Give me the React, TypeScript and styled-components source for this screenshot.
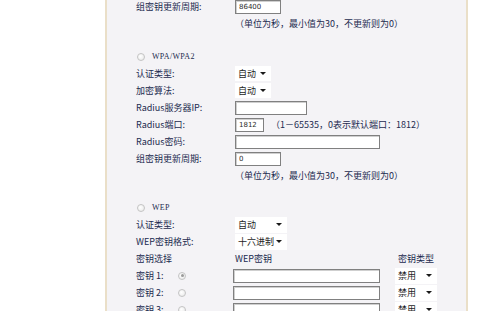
import React from "react";
import styled, { createGlobalStyle } from "styled-components";

const GlobalStyle = createGlobalStyle`
   html, body {
      margin: 0;
      padding: 0;
      background: #ffffff;
      overflow: hidden;
   }
   body {
      font-family: "Noto Sans CJK SC", "Noto Sans", sans-serif;
      font-size: 9px;
      color: #1c2b4f;
   }
`;

const Page = styled.div`
   width: 500px;
   height: 311px;
   display: flex;
`;

const Panel = styled.div`
   margin-left: 105px;
   width: 330px;
   height: 100%;
   background: #f4f3f6;
   border-left: 2px solid #eadfc8;
   border-right: 2px solid #eadfc8;
   padding-left: 29px;
   box-sizing: content-box;
`;

const Content = styled.div`
   margin-top: -2px;
   display: flex;
   flex-direction: column;
`;

const Row = styled.div<{ $h?: number }>`
   display: flex;
   align-items: center;
   height: ${(p) => p.$h ?? 17}px;
   white-space: nowrap;
   line-height: 1;
`;

const Label = styled.div<{ $w?: number }>`
   width: ${(p) => p.$w ?? 99}px;
   flex-shrink: 0;
   display: flex;
   align-items: center;
`;

const Hint = styled.span<{ $indent?: number }>`
   margin-left: ${(p) => p.$indent ?? 99}px;
`;

const SideHint = styled.span`
   margin-left: 7px;
`;

const Field = styled.input<{ $w: number }>`
   width: ${(p) => p.$w}px;
   height: 14px;
   box-sizing: border-box;
   margin: 0;
   padding: 0 3px;
   border: 1px solid #808080;
   box-shadow: inset 1px 1px 0 #cfcfcf;
   background: #ffffff;
   font-family: "DejaVu Sans", sans-serif;
   font-size: 7px;
   color: #2c2c2c;
   outline: none;
`;

const SelectBox = styled.div<{ $w: number; $h?: number }>`
   width: ${(p) => p.$w}px;
   height: ${(p) => p.$h ?? 15}px;
   box-sizing: border-box;
   background: #ffffff;
   display: flex;
   align-items: center;
   justify-content: space-between;
   padding: 0 5px 0 3px;
   font-size: 9px;
   color: #1d1d1d;
`;

const Arrow = styled.span`
   width: 0;
   height: 0;
   border-left: 3px solid transparent;
   border-right: 3px solid transparent;
   border-top: 3px solid #1a1a1a;
`;

const Radio = styled.span<{ $checked?: boolean; $gap?: number }>`
   width: 8px;
   height: 8px;
   border-radius: 50%;
   box-sizing: border-box;
   border: 1px solid #c4c4c4;
   background: radial-gradient(circle at 40% 40%, #ffffff, #e6e6e6);
   margin-left: ${(p) => p.$gap ?? 0}px;
   display: flex;
   align-items: center;
   justify-content: center;

   &::after {
      content: "";
      width: 3px;
      height: 3px;
      border-radius: 50%;
      background: ${(p) => (p.$checked ? "#9a9a9a" : "transparent")};
   }
`;

const OptionTitle = styled.span`
   margin-left: 7px;
   font-family: "Liberation Serif", serif;
   font-size: 8px;
   letter-spacing: 0.3px;
`;

const KeyText = styled.span`
   width: 42px;
`;

const KeyField = styled(Field)`
   margin-left: -2px;
`;

const KeyTypeBox = styled(SelectBox)`
   margin-left: 15px;
`;

const ColHead = styled.span<{ $left: number }>`
   margin-left: ${(p) => p.$left}px;
`;

const keys = [1, 2, 3];

const Select: React.FC<{ value: string; w: number; h?: number }> = ({ value, w, h }) => (
   <SelectBox $w={w} $h={h}>
      <span>{value}</span>
      <Arrow />
   </SelectBox>
);

const App: React.FC = () => {
   return (
      <Page>
         <GlobalStyle />
         <Panel>
            <Content>
               <Row>
                  <Label>组密钥更新周期:</Label>
                  <Field $w={46} readOnly defaultValue="86400" />
               </Row>
               <Row>
                  <Hint>（单位为秒，最小值为30，不更新则为0）</Hint>
               </Row>
               <Row $h={16} />

               <Row>
                  <Radio $gap={1} />
                  <OptionTitle>WPA/WPA2</OptionTitle>
               </Row>
               <Row>
                  <Label>认证类型:</Label>
                  <Select value="自动" w={36} />
               </Row>
               <Row>
                  <Label>加密算法:</Label>
                  <Select value="自动" w={36} />
               </Row>
               <Row>
                  <Label>Radius服务器IP:</Label>
                  <Field $w={72} readOnly defaultValue="" />
               </Row>
               <Row>
                  <Label>Radius端口:</Label>
                  <Field $w={29} readOnly defaultValue="1812" />
                  <SideHint>（1－65535，0表示默认端口：1812）</SideHint>
               </Row>
               <Row>
                  <Label>Radius密码:</Label>
                  <Field $w={145} readOnly defaultValue="" />
               </Row>
               <Row>
                  <Label>组密钥更新周期:</Label>
                  <Field $w={46} readOnly defaultValue="0" />
               </Row>
               <Row>
                  <Hint>（单位为秒，最小值为30，不更新则为0）</Hint>
               </Row>
               <Row $h={15} />

               <Row>
                  <Radio $gap={1} />
                  <OptionTitle>WEP</OptionTitle>
               </Row>
               <Row>
                  <Label>认证类型:</Label>
                  <Select value="自动" w={52} h={16} />
               </Row>
               <Row>
                  <Label>WEP密钥格式:</Label>
                  <Select value="十六进制" w={52} h={16} />
               </Row>
               <Row>
                  <Label>密钥选择</Label>
                  <span>WEP密钥</span>
                  <ColHead $left={126}>密钥类型</ColHead>
               </Row>
               {keys.map((k) => (
                  <Row key={k}>
                     <Label>
                        <KeyText>密钥 {k}:</KeyText>
                        <Radio $checked={k === 1} />
                     </Label>
                     <KeyField $w={147} readOnly defaultValue="" />
                     <KeyTypeBox $w={42} $h={16}>
                        <span>禁用</span>
                        <Arrow />
                     </KeyTypeBox>
                  </Row>
               ))}
            </Content>
         </Panel>
      </Page>
   );
};

export default App;
